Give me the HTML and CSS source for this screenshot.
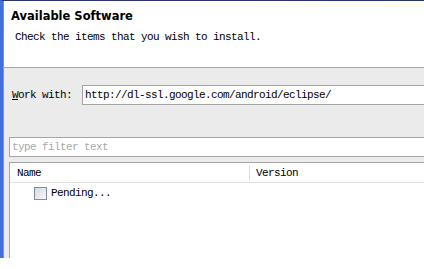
FILE: index.html
```html
<!DOCTYPE html>
<html>
<head>
    <title>Install</title>
    <link rel="stylesheet" href="styles.css">
</head>
<body>
    <div class="window">
        <div class="header">
            <div class="title">Available Software</div>
            <div class="subtitle">Check the items that you wish to install.</div>
        </div>

        <div class="content">
            <div class="work-row">
                <label for="site"><u>W</u>ork with:</label>
                <input type="text" id="site" value="http://dl-ssl.google.com/android/eclipse/">
            </div>

            <input type="text" class="filter" placeholder="type filter text">

            <div class="tree">
                <div class="tree-head">
                    <div class="col-name">Name</div>
                    <div class="col-version">Version</div>
                </div>
                <div class="tree-row">
                    <span class="check"></span>
                    <span>Pending...</span>
                </div>
            </div>
        </div>
    </div>
</body>
</html>
```

FILE: styles.css
```css
body {
    margin: 0;
    background-color: white;
    font-family: "Liberation Mono", monospace;
    font-size: 11px;
    letter-spacing: -0.6px;
    color: black;
    overflow: hidden;
}

.window {
    height: 257px;
    border-top: 1px solid #2a3370;
    border-left: 3px solid #3f6fe0;
    overflow: hidden;
    display: flex;
    flex-direction: column;
}

.header {
    flex: none;
    background-color: white;
    background-image: linear-gradient(to right, white 50%, #fffff2);
    background-size: 100% 6px;
    background-repeat: no-repeat;
    height: 67px;
    border-bottom: 1px solid #a7a7a7;
    padding-left: 8px;
    box-sizing: border-box;
    box-shadow: inset 1px 0 0 #8a8fb0;
}

.title {
    font-family: "DejaVu Sans", sans-serif;
    font-weight: bold;
    font-size: 11.5px;
    letter-spacing: 0;
    padding-top: 8px;
    line-height: 14px;
}

.subtitle {
    margin-top: 7px;
    margin-left: 4px;
    line-height: 14px;
}

.content {
    flex: 1;
    background-color: #ebebeb;
    padding-left: 6px;
    display: flex;
    flex-direction: column;
    box-shadow: inset 1px 0 0 #8a8fb0;
}

.work-row {
    display: flex;
    align-items: center;
    margin-top: 17px;
}

.work-row label {
    flex: none;
    width: 73px;
    box-sizing: border-box;
    padding-left: 3px;
    white-space: nowrap;
}

.work-row input {
    flex: none;
    width: 360px;
    height: 20px;
    box-sizing: border-box;
    border: 1px solid #a5a5a5;
    padding: 0 2px;
    font-family: "Liberation Mono", monospace;
    font-size: 11px;
    letter-spacing: -0.6px;
    color: black;
    outline: none;
}

.filter {
    flex: none;
    margin-top: 32px;
    width: 430px;
    height: 20px;
    box-sizing: border-box;
    border: 1px solid #a5a5a5;
    padding: 0 2px;
    font-family: "Liberation Mono", monospace;
    font-size: 11px;
    letter-spacing: -0.6px;
    outline: none;
}

.filter::placeholder {
    color: #a8a8a8;
}

.tree {
    flex: 1;
    margin-top: 5px;
    width: 430px;
    background-color: white;
    border-top: 1px solid #a5a5a5;
    border-left: 1px solid #a5a5a5;
}

.tree-head {
    display: flex;
    height: 20px;
    align-items: center;
    padding-top: 1px;
    box-sizing: border-box;
    border-bottom: 1px solid #e2e2e2;
}

.col-name {
    width: 232px;
    padding-left: 7px;
    border-right: 1px solid #dcdcdc;
    height: 16px;
    line-height: 16px;
}

.col-version {
    padding-left: 6px;
}

.tree-row {
    display: flex;
    align-items: center;
    gap: 4px;
    height: 16px;
    padding-left: 24px;
    margin-top: 2px;
}

.check {
    width: 11px;
    height: 11px;
    border: 1px solid #7d8ba3;
    background: linear-gradient(135deg, #d6d8dc, #f8f8f8);
}
```
